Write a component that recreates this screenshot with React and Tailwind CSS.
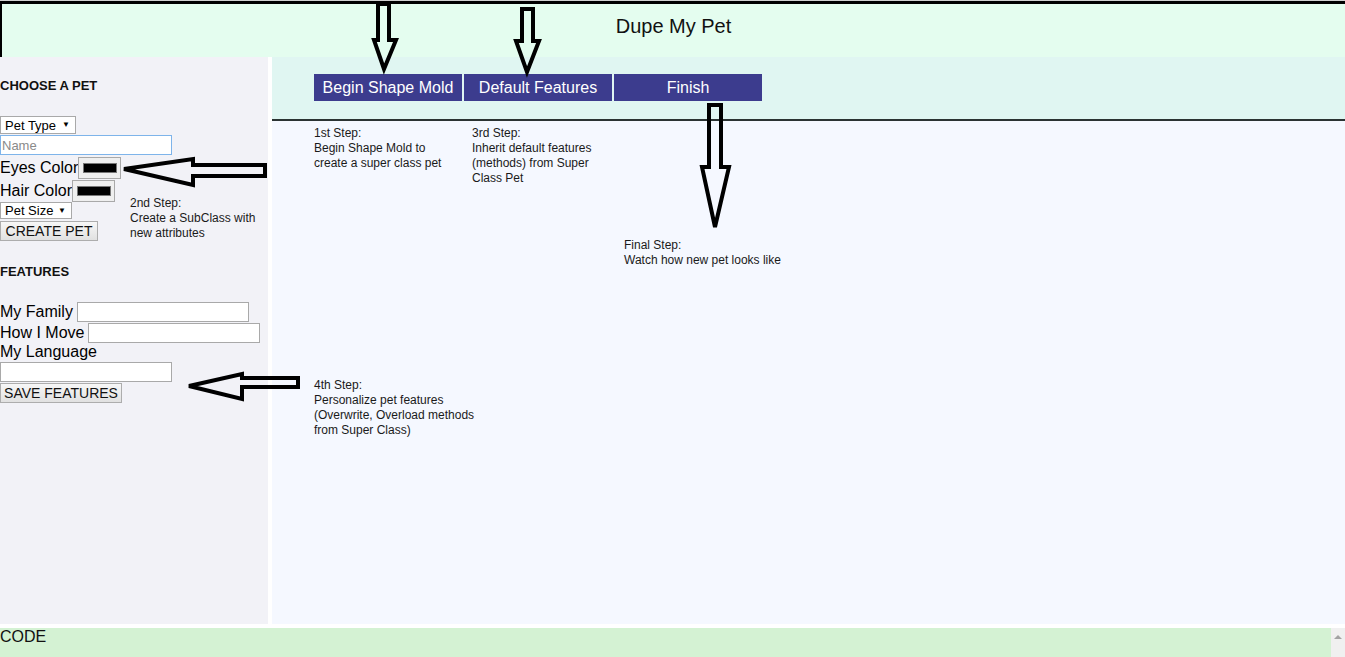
const font = { fontFamily: '"Liberation Sans", Arial, sans-serif' };

function FakeSelect({ label, width, height }) {
  return (
    <div className={`flex items-center justify-between border border-[#a9a9a9] bg-white pl-[4px] pr-[5px] text-[13px] leading-none text-black ${width} ${height}`}>
      <span>{label}</span>
      <span className="text-[8px]">▼</span>
    </div>
  );
}

function ColorSwatch() {
  return (
    <div className="flex h-[22px] w-[43px] items-center justify-center border border-[#a9a9a9] bg-[#efefef]">
      <div className="h-[10px] w-[34px] border border-[#777] bg-black" />
    </div>
  );
}

function GrayButton({ children, width }) {
  return (
    <button className={`block h-[20px] border border-[#adadad] bg-gradient-to-b from-[#f7f7f7] to-[#e1e1e1] text-[14px] leading-none text-[#111] ${width}`}>
      {children}
    </button>
  );
}

function Note({ className, lines }) {
  return (
    <div className={`absolute text-[12px] leading-[15px] text-[#1a1a1a] ${className}`}>
      {lines.map((l) => (
        <div key={l}>{l}</div>
      ))}
    </div>
  );
}

function Arrows() {
  const arrows = [
    '378,4 389,4 389,40 396,40 384,69 374,40 378,40',
    '522,9 533,9 533,41 539,41 527,72 516,41 522,41',
    '709,105 721,105 721,167 729,167 715,227 702,167 709,167',
    '124,169 193,159 193,165 265,165 265,176 193,176 193,185',
    '189,386 242,374 242,378 298,378 298,387 242,387 242,399',
  ];
  return (
    <svg className="pointer-events-none absolute left-0 top-0" width="1345" height="657">
      {arrows.map((p) => (
        <polygon key={p} points={p} fill="none" stroke="black" strokeWidth="4" strokeLinejoin="miter" />
      ))}
    </svg>
  );
}

export default function App() {
  return (
    <div className="relative h-[657px] w-[1345px] overflow-hidden bg-white text-black" style={font}>
      {/* header */}
      <div className="border-t border-[#d0d0d0]">
        <div className="h-[56px] border-l-2 border-t-[3px] border-black bg-[#e4fdef] pt-[10px] text-center text-[20px] leading-[24px] text-[#111]">
          Dupe My Pet
        </div>
      </div>

      <div className="flex h-[567px]">
        {/* sidebar */}
        <div className="relative flex w-[268px] flex-col items-start bg-[#f2f2f7]">
          <div className="mt-[20px] text-[13px] font-bold leading-[18px] text-[#111]">CHOOSE A PET</div>
          <div className="mt-[21px]">
            <FakeSelect label="Pet Type" width="w-[76px]" height="h-[18px]" />
          </div>
          <input
            placeholder="Name"
            className="mt-px h-[20px] w-[172px] border border-[#7eb4ea] bg-white px-[1px] text-[13px] text-black outline-none placeholder:text-[#8a8a8a]"
          />
          <div className="mt-[2px] flex h-[22px] items-center text-[16px]">
            <span>Eyes Color</span>
            <ColorSwatch />
          </div>
          <div className="mt-px flex h-[22px] items-center text-[16px]">
            <span>Hair Color</span>
            <ColorSwatch />
          </div>
          <FakeSelect label="Pet Size" width="w-[72px]" height="h-[17px]" />
          <div className="mt-[2px] flex">
            <GrayButton width="w-[98px]">CREATE PET</GrayButton>
          </div>

          <div className="mt-[22px] text-[13px] font-bold leading-[18px] text-[#111]">FEATURES</div>
          <div className="mt-[21px] flex h-[20px] items-center text-[16px]">
            <span className="mr-[4px]">My Family</span>
            <input className="h-[20px] w-[172px] border border-[#a9a9a9] bg-white outline-none" />
          </div>
          <div className="mt-px flex h-[20px] items-center text-[16px]">
            <span className="mr-[4px]">How I Move</span>
            <input className="h-[20px] w-[172px] border border-[#a9a9a9] bg-white outline-none" />
          </div>
          <div className="h-[18px] text-[16px] leading-[18px]">My Language</div>
          <input className="mt-px h-[20px] w-[172px] border border-[#a9a9a9] bg-white outline-none" />
          <div className="mt-px flex">
            <GrayButton width="w-[122px]">SAVE FEATURES</GrayButton>
          </div>

          <Note className="left-[130px] top-[139px]" lines={['2nd Step:', 'Create a SubClass with', 'new attributes']} />
        </div>

        {/* main */}
        <div className="relative ml-[4px] flex flex-1 flex-col bg-[#f5f8ff]">
          <div className="h-[64px] border-b-2 border-[#2b3333] bg-[#e0f6f2] pl-[42px] pt-[17px]">
            <div className="flex gap-[2px]">
              {['Begin Shape Mold', 'Default Features', 'Finish'].map((t) => (
                <div key={t} className="flex h-[27px] w-[148px] items-center justify-center bg-[#3c3c8e] text-[16px] text-white">
                  {t}
                </div>
              ))}
            </div>
          </div>

          <Note className="left-[42px] top-[69px]" lines={['1st Step:', 'Begin Shape Mold to', 'create a super class pet']} />
          <Note className="left-[200px] top-[69px]" lines={['3rd Step:', 'Inherit default features', '(methods) from Super', 'Class Pet']} />
          <Note className="left-[352px] top-[181px]" lines={['Final Step:', 'Watch how new pet looks like']} />
          <Note className="left-[42px] top-[321px]" lines={['4th Step:', 'Personalize pet features', '(Overwrite, Overload methods', 'from Super Class)']} />
        </div>
      </div>

      {/* footer */}
      <div className="mt-[4px] flex h-[40px]">
        <div className="flex-1 bg-[#d4f2d3] text-[16px] leading-[18px] text-[#111]">CODE</div>
        <div className="flex w-[14px] justify-center bg-[#f0f0f0] pt-[7px]">
          <div className="h-0 w-0 border-x-[4px] border-b-[4px] border-x-transparent border-b-[#a3a3a3]" />
        </div>
      </div>

      <Arrows />
    </div>
  );
}
